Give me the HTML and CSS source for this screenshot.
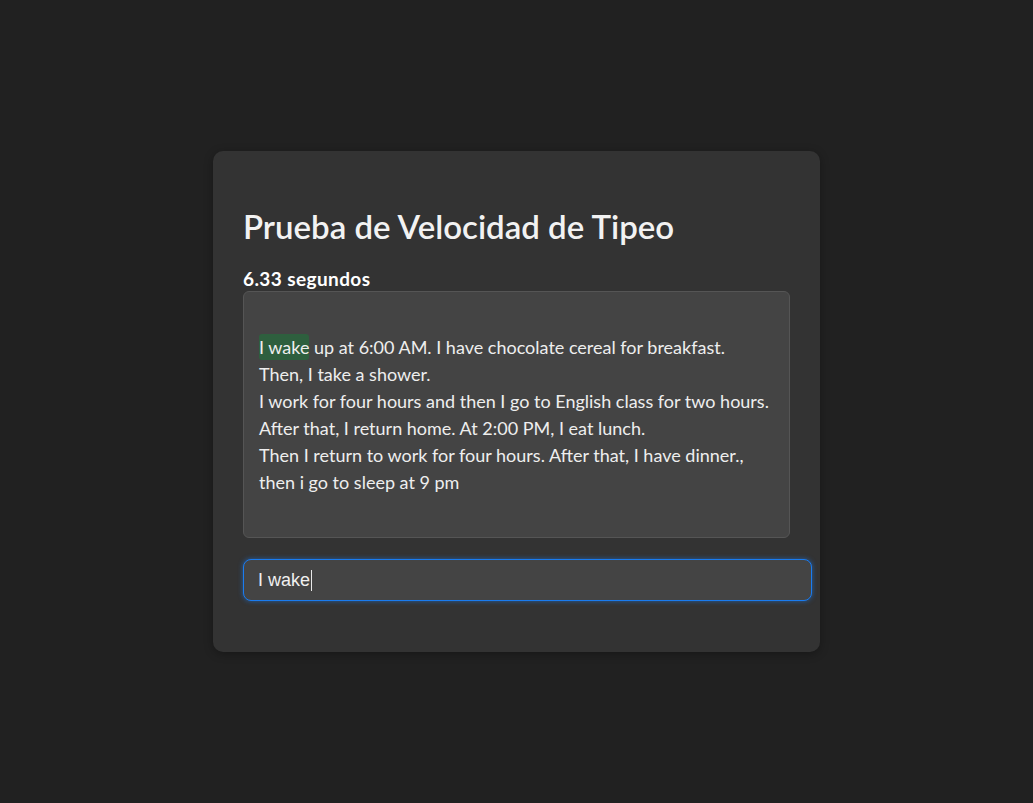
FILE: index.html
```html
<!DOCTYPE html>
<html lang="es">
<head>
<meta charset="utf-8">
<title>Prueba de Velocidad de Tipeo</title>
<link rel="stylesheet" href="styles.css">
</head>
<body>
<main class="card">
  <h1 class="title">Prueba de Velocidad de Tipeo</h1>
  <div class="timer">6.33 segundos</div>
  <div class="passage">
<span class="done">I wake</span> up at 6:00 AM. I have chocolate cereal for breakfast.
Then, I take a shower.
I work for four hours and then I go to English class for two hours.
After that, I return home. At 2:00 PM, I eat lunch.
Then I return to work for four hours. After that, I have dinner.,
then i go to sleep at 9 pm
</div>
  <div class="field">
    <input class="typing" type="text" value="I wake" autofocus>
    <span class="caret"></span>
  </div>
</main>
</body>
</html>
```
FILE: styles.css
```css
html, body {
  height: 100%;
}
body {
  margin: 0;
  background: #212121;
  color: #f0f0f0;
  font-family: Lato, "Open Sans", sans-serif;
  display: flex;
  align-items: center;
  justify-content: center;
}
.card {
  box-sizing: border-box;
  width: 607px;
  height: 501px;
  background: #333333;
  border-radius: 10px;
  padding: 30px;
  box-shadow: 0 2px 10px rgba(0, 0, 0, 0.3);
}
.title {
  font-size: 33px;
  font-weight: 600;
  line-height: 38px;
  margin: 26px 0 22px;
  color: #f2f2f2;
}
.timer {
  font-size: 19px;
  font-weight: 700;
  letter-spacing: 0.4px;
  line-height: 24px;
  height: 24px;
  color: #ffffff;
}
.passage {
  white-space: pre-wrap;
  background: #444444;
  border: 1px solid #555555;
  border-radius: 6px;
  padding: 15px;
  font-size: 18px;
  line-height: 27px;
  color: #eeeeee;
  height: 215px;
  box-sizing: content-box;
  width: 515px;
}
.done {
  background: #2e5f3e;
  border-radius: 3px;
  padding: 2px 0;
}
.field {
  position: relative;
  margin-top: 21px;
  width: calc(100% + 22px);
}
.typing {
  display: block;
  box-sizing: border-box;
  width: 100%;
  height: 42px;
  padding: 0 14px;
  background: #444444;
  color: #f0f0f0;
  border: 1px solid #1a7cf0;
  border-radius: 8px;
  box-shadow: 0 0 5px rgba(26, 124, 240, 0.6);
  font-family: "Liberation Sans", Arial, sans-serif;
  font-size: 18px;
  outline: none;
  caret-color: #ffffff;
}
.caret {
  position: absolute;
  left: 68px;
  top: 11px;
  width: 1px;
  height: 21px;
  background: #e8e8e8;
}
```
